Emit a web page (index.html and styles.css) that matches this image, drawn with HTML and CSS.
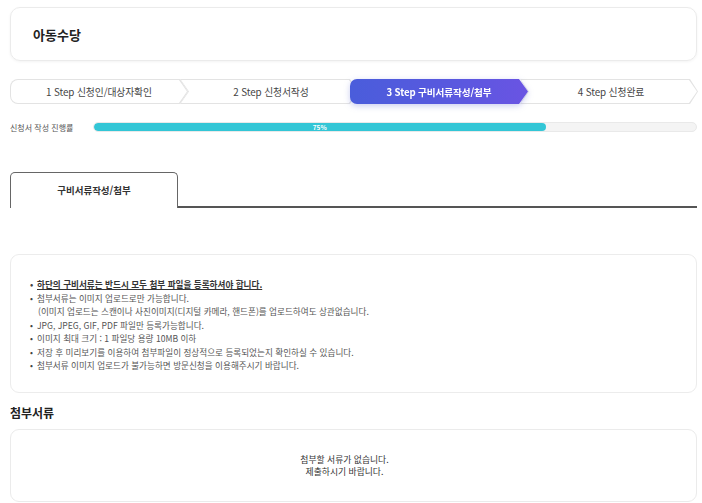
FILE: index.html
```html
<!DOCTYPE html>
<html lang="ko">
<head>
<meta charset="utf-8">
<title>아동수당</title>
<link rel="stylesheet" href="styles.css">
</head>
<body>
<div class="page">
  <div class="title-card"><h1 class="title">아동수당</h1></div>

  <div class="steps">
    <div class="step step-first"><div class="step-in">1 Step 신청인/대상자확인</div></div>
    <div class="step step-mid"><div class="step-in">2 Step 신청서작성</div></div>
    <div class="step-active-wrap"><div class="step step-active">3 Step 구비서류작성/첨부</div></div>
    <div class="step step-mid"><div class="step-in">4 Step 신청완료</div></div>
  </div>

  <div class="progress-row">
    <span class="progress-label">신청서 작성 진행률</span>
    <div class="progress-track">
      <div class="progress-fill" style="width:75%">75%</div>
    </div>
  </div>

  <div class="tabs">
    <div class="tab">구비서류작성/첨부</div>
    <div class="tab-line"></div>
  </div>

  <div class="notice">
    <ul class="notice-list">
      <li class="strong">하단의 구비서류는 반드시 모두 첨부 파일을 등록하셔야 합니다.</li>
      <li>첨부서류는 이미지 업로드로만 가능합니다.<br><span class="cont">(이미지 업로드는 스캔이나 사진이미지(디지털 카메라, 핸드폰)를 업로드하여도 상관없습니다.</span></li>
      <li>JPG, JPEG, GIF, PDF 파일만 등록가능합니다.</li>
      <li>이미지 최대 크기 : 1 파일당 용량 10MB 이하</li>
      <li>저장 후 미리보기를 이용하여 첨부파일이 정상적으로 등록되었는지 확인하실 수 있습니다.</li>
      <li>첨부서류 이미지 업로드가 불가능하면 방문신청을 이용해주시기 바랍니다.</li>
    </ul>
  </div>

  <h2 class="section-title">첨부서류</h2>
  <div class="empty-box">
    <p class="empty-text">첨부할 서류가 없습니다.<br>제출하시기 바랍니다.</p>
  </div>
</div>
</body>
</html>
```

FILE: styles.css
```css
* { box-sizing: border-box; }
html, body { margin: 0; padding: 0; background: #fff; }
body {
  font-family: "Noto Sans CJK KR", "Noto Sans", "Liberation Sans", sans-serif;
  color: #333;
}
.page {
  width: 702px;
  padding: 7px 5px 0 10px;
}
.title-card {
  height: 54px;
  border: 1px solid #ebebeb;
  border-radius: 10px;
  box-shadow: 0 1px 3px rgba(0,0,0,0.05);
  display: flex;
  align-items: center;
  padding-left: 22px;
}
.title {
  margin: 0;
  font-size: 13px;
  font-weight: 700;
  color: #222;
  line-height: 1;
}

/* steps */
.steps {
  margin-top: 18px;
  height: 25px;
  display: flex;
}
.step {
  width: 178px;
  height: 25px;
  flex: none;
  background: #e3e3e3;
  padding: 1px;
  display: flex;
}
.step + .step, .step-active-wrap, .step-active-wrap + .step { margin-left: -8px; }
.step-in {
  flex: 1;
  background: #fff;
  display: flex;
  align-items: center;
  justify-content: center;
  font-size: 9.8px;
  color: #444;
  letter-spacing: -0.1px;
}
.step-first {
  border-radius: 8px 0 0 8px;
  clip-path: polygon(0 0, calc(100% - 8px) 0, 100% 50%, calc(100% - 8px) 100%, 0 100%);
}
.step-first .step-in {
  border-radius: 7px 0 0 7px;
  clip-path: polygon(0 0, calc(100% - 8px) 0, 100% 50%, calc(100% - 8px) 100%, 0 100%);
}
.step-mid {
  clip-path: polygon(0 0, calc(100% - 8px) 0, 100% 50%, calc(100% - 8px) 100%, 0 100%, 8px 50%);
}
.step-mid .step-in {
  clip-path: polygon(0 0, calc(100% - 8px) 0, 100% 50%, calc(100% - 8px) 100%, 0 100%, 8px 50%);
  padding-left: 4px;
}
.step-active-wrap {
  flex: none;
  position: relative;
  z-index: 2;
  filter: drop-shadow(0 2px 3px rgba(70, 80, 200, 0.28));
}
.step-active {
  width: 178px;
  background: linear-gradient(90deg, #4a5ddb 0%, #5a58df 60%, #6a54e3 100%);
  border-radius: 7px 0 0 7px;
  clip-path: polygon(0 0, calc(100% - 9px) 0, 100% 50%, calc(100% - 9px) 100%, 0 100%);
  align-items: center;
  justify-content: center;
  color: #fff;
  font-weight: 700;
  font-size: 9.6px;
  letter-spacing: -0.1px;
}
.step-active-wrap + .step { position: relative; z-index: 1; }

/* progress */
.progress-row {
  margin-top: 18px;
  height: 10px;
  display: flex;
  align-items: center;
}
.progress-label {
  width: 83px;
  flex: none;
  font-size: 8px;
  color: #555;
}
.progress-track {
  flex: 1;
  height: 10px;
  background: #f4f4f4;
  border: 1px solid #e9e9e9;
  border-radius: 5px;
  overflow: hidden;
}
.progress-fill {
  height: 100%;
  background: #33c6d6;
  border-radius: 5px;
  color: #fff;
  font-size: 6.5px;
  font-weight: 700;
  line-height: 8px;
  text-align: center;
}

/* tabs */
.tabs {
  margin-top: 40px;
  display: flex;
  align-items: flex-end;
}
.tab {
  width: 168px;
  height: 36px;
  flex: none;
  border: 1px solid #666;
  border-bottom: none;
  border-radius: 5px 5px 0 0;
  display: flex;
  align-items: center;
  justify-content: center;
  font-size: 9.5px;
  font-weight: 700;
  color: #333;
  padding-bottom: 2px;
}
.tab-line {
  flex: 1;
  height: 2px;
  background: #555;
}

/* notice */
.notice {
  margin-top: 46px;
  height: 139px;
  border: 1px solid #ececec;
  border-radius: 9px;
  padding: 23px 0 0 19px;
}
.notice-list {
  margin: 0;
  padding: 0;
  list-style: none;
  font-size: 8.6px;
  line-height: 13.5px;
  color: #555;
}
.notice-list li::before {
  content: "•";
  display: inline-block;
  width: 7px;
  color: #444;
}
.notice-list li.strong {
  font-weight: 700;
  color: #333;
  text-decoration: underline;
  text-underline-offset: 1px;
}
.notice-list .cont {
  display: inline-block;
  padding-left: 8px;
}

/* attachments */
.section-title {
  margin: 12px 0 0 0;
  height: 16px;
  font-size: 12px;
  font-weight: 700;
  line-height: 16px;
  color: #222;
}
.empty-box {
  margin-top: 8px;
  height: 73px;
  border: 1px solid #ebebeb;
  border-radius: 9px;
  display: flex;
  align-items: center;
  justify-content: center;
  padding-right: 18px;
}
.empty-text {
  margin: 0;
  text-align: center;
  font-size: 8.8px;
  line-height: 11.5px;
  color: #333;
}
```
